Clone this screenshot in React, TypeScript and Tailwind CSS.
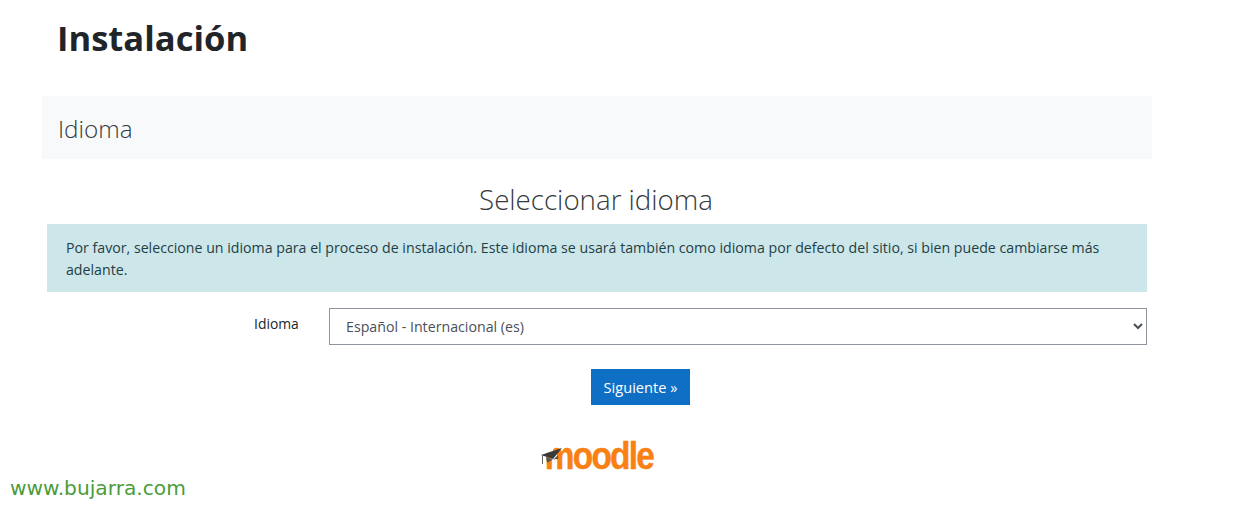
import React from "react";

const font = { fontFamily: '"Open Sans", "Noto Sans", sans-serif' };

const MoodleLogo = () => (
  <div className="relative flex h-[30px] w-[112px] items-end justify-end">
    <span className="origin-right scale-x-[0.88] font-['Liberation_Sans'] text-[38px] font-bold leading-[30px] tracking-[-2px] text-[#f98012] [-webkit-text-stroke:0.4px_#f98012]">
      moodle
    </span>
    <svg className="absolute left-0 top-[6px]" width="24" height="18" viewBox="0 0 24 18">
      <path d="M0 8 L12 4 L12 0 L0 0 Z" fill="#ffffff" />
      <path d="M0 8 L21 1 L12 12 Z" fill="#3a3a3a" />
      <path d="M5 10 L12 13 L17 8 L17 12 Q11 12 6 16 Z" fill="#555555" />
      <path d="M1.5 8 L1.5 17" stroke="#666" strokeWidth="1" />
    </svg>
  </div>
);

export default function App() {
  return (
    <div className="relative h-[509px] w-[1242px] overflow-hidden bg-white text-[#1d2125]" style={font}>
      <div className="ml-[42px] w-[1110px]">
        <h1 className="h-[96px] pl-[15px] pt-[11px] text-[34.6px] font-bold leading-[54px] text-[#212529]">
          Instalación
        </h1>
        <div className="flex h-[63px] items-center bg-[#f8f9fa] pl-[16px]">
          <h2 className="pt-[3px] text-[24.3px] font-light leading-none text-[#343a40]">Idioma</h2>
        </div>
        <div className="px-[5px]">
          <h3 className="h-[65px] pt-[22px] pr-[2px] text-center text-[27.7px] font-light leading-[36px] text-[#343a40]">
            Seleccionar idioma
          </h3>
          <div className="h-[68px] bg-[#cce6ea] px-[19px] pt-[13px] text-[14.18px] leading-[22px] text-[#1f3f45]">
            Por favor, seleccione un idioma para el proceso de instalación. Este idioma se usará también como idioma por defecto del sitio, si bien puede cambiarse más adelante.
          </div>
          <div className="mt-[16px] flex items-start">
            <label className="w-[282px] pl-[207px] pt-[5px] text-[13.9px] leading-[22px] text-[#212529]">Idioma</label>
            <select
              defaultValue="es"
              className="h-[37px] flex-1 border border-[#8f959e] bg-white pl-[12px] pr-[2px] text-[14.2px] text-[#495057] outline-none"
            >
              <option value="es">Español - Internacional (es)</option>
              <option value="en">English (en)</option>
            </select>
          </div>
          <div className="mt-[24px] flex justify-center pl-[87px]">
            <button className="h-[36px] w-[99px] bg-[#0f6fc5] pt-[1px] text-[14.6px] text-white">Siguiente »</button>
          </div>
        </div>
        <div className="mt-[36px] flex justify-center">
          <MoodleLogo />
        </div>
      </div>
      <span className="absolute left-[10px] top-[476px] font-['DejaVu_Sans'] text-[20.2px] leading-[24px] text-[#4a9c3a]">
        www.bujarra.com
      </span>
    </div>
  );
}
